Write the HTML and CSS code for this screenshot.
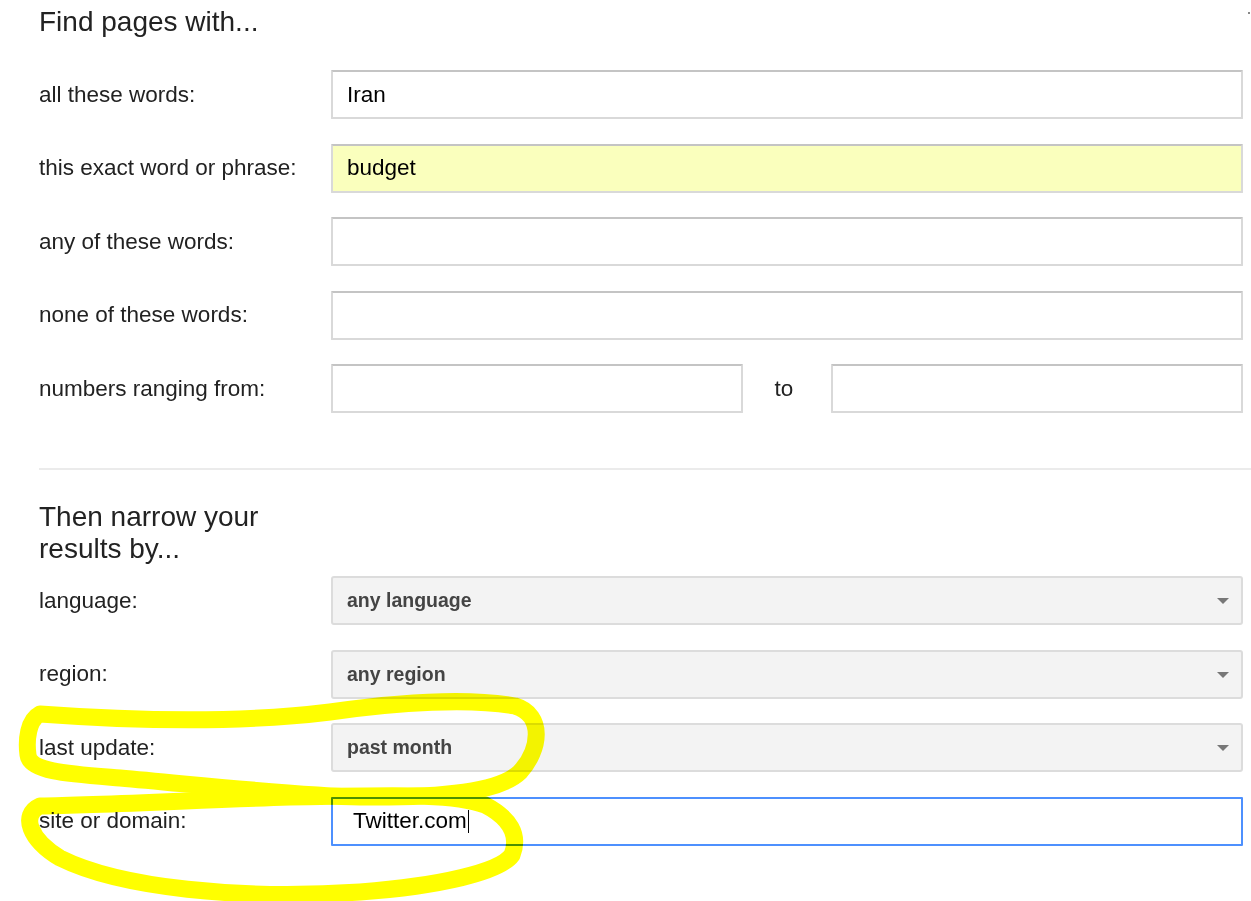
FILE: index.html
```html
<!DOCTYPE html>
<html lang="en">
<head>
    <meta charset="UTF-8">
    <title>Advanced Search</title>
    <link rel="stylesheet" href="styles.css">
</head>
<body>
    <div class="page">
        <!-- Find pages with -->
        <h2 class="heading">Find pages with...</h2>
        <div class="form-grid">
            <label class="field-label">all these words:</label>
            <input class="text-input" type="text" value="Iran">

            <label class="field-label">this exact word or phrase:</label>
            <input class="text-input autofilled" type="text" value="budget">

            <label class="field-label">any of these words:</label>
            <input class="text-input" type="text">

            <label class="field-label">none of these words:</label>
            <input class="text-input" type="text">

            <label class="field-label">numbers ranging from:</label>
            <div class="range">
                <input class="text-input" type="text">
                <span class="range-to">to</span>
                <input class="text-input" type="text">
            </div>
        </div>

        <div class="divider"></div>

        <!-- Then narrow your results by -->
        <h2 class="heading narrow">Then narrow your results by...</h2>
        <div class="form-grid">
            <label class="field-label">language:</label>
            <div class="select-box">any language<span class="arrow"></span></div>

            <label class="field-label">region:</label>
            <div class="select-box">any region<span class="arrow"></span></div>

            <label class="field-label">last update:</label>
            <div class="select-box">past month<span class="arrow"></span></div>

            <label class="field-label">site or domain:</label>
            <div class="text-input focused">Twitter.com<span class="caret"></span></div>
        </div>
    </div>

    <div class="corner-mark"></div>

    <!-- hand drawn highlight over the page -->
    <svg class="scribble" width="1251" height="901" viewBox="0 0 1251 901">
        <path d="M40 714 C150 722 250 722 330 712 C400 702 470 698 515 706 C545 715 540 750 520 772 C500 792 440 798 360 797 C300 796 200 785 120 778 C70 774 30 772 28 755 C26 740 28 720 40 714"/>
        <path d="M290 797 C200 800 100 805 40 806 C20 815 30 840 60 858 C120 888 240 900 360 892 C440 886 500 872 512 855 C520 835 510 818 485 805 C450 792 380 796 290 797"/>
    </svg>
</body>
</html>
```

FILE: styles.css
```css
body {
    margin: 0;
    background-color: #fff;
    font-family: "Liberation Sans", Arial, sans-serif;
    color: #222;
}
.page {
    padding: 6px 0 0 39px;
}
.heading {
    margin: 0 0 32px;
    font-size: 28px;
    line-height: 32px;
    font-weight: normal;
    color: #222;
}
.heading.narrow {
    width: 270px;
    margin: 31px 0 11px;
}
.form-grid {
    display: grid;
    grid-template-columns: 292px 912px;
    grid-auto-rows: 49px;
    row-gap: 24.5px;
}
.field-label {
    display: flex;
    align-items: center;
    font-size: 22.5px;
    color: #222;
}
.text-input {
    box-sizing: border-box;
    width: 100%;
    height: 49px;
    margin: 0;
    padding: 0 14px;
    border: 2px solid #d9d9d9;
    border-top-color: #c4c4c4;
    border-radius: 1px;
    font-family: "Liberation Sans", Arial, sans-serif;
    font-size: 22.5px;
    color: #000;
    background-color: #fff;
    outline: none;
}
.text-input.autofilled {
    background-color: #faffbd;
}
.text-input.focused {
    display: flex;
    align-items: center;
    padding-left: 20px;
    border-color: #4d90fe;
}
.caret {
    display: inline-block;
    width: 1px;
    height: 23px;
    margin-left: 1px;
    background-color: #000;
}
.range {
    display: flex;
    align-items: center;
}
.range .text-input {
    flex: 1;
}
.range-to {
    width: 88px;
    flex: none;
    box-sizing: border-box;
    padding-right: 6px;
    text-align: center;
    font-size: 22.5px;
    color: #222;
}
.divider {
    height: 2px;
    margin-top: 55px;
    background-color: #ebebeb;
}
.select-box {
    position: relative;
    box-sizing: border-box;
    display: flex;
    align-items: center;
    height: 49px;
    padding-left: 14px;
    border: 2px solid #dcdcdc;
    border-radius: 3px;
    background-color: #f3f3f3;
    font-size: 19.5px;
    font-weight: bold;
    color: #444;
}
.arrow {
    position: absolute;
    right: 12px;
    top: 20px;
    width: 0;
    height: 0;
    border-left: 6px solid transparent;
    border-right: 6px solid transparent;
    border-top: 6px solid #777;
}
.corner-mark {
    position: absolute;
    left: 1248px;
    top: 12px;
    width: 2px;
    height: 2px;
    background-color: #888;
}
.scribble {
    position: absolute;
    left: 0;
    top: 0;
    pointer-events: none;
    mix-blend-mode: multiply;
}
.scribble path {
    fill: none;
    stroke: #ffff00;
    stroke-width: 17;
    stroke-linecap: round;
    stroke-linejoin: round;
}
```
